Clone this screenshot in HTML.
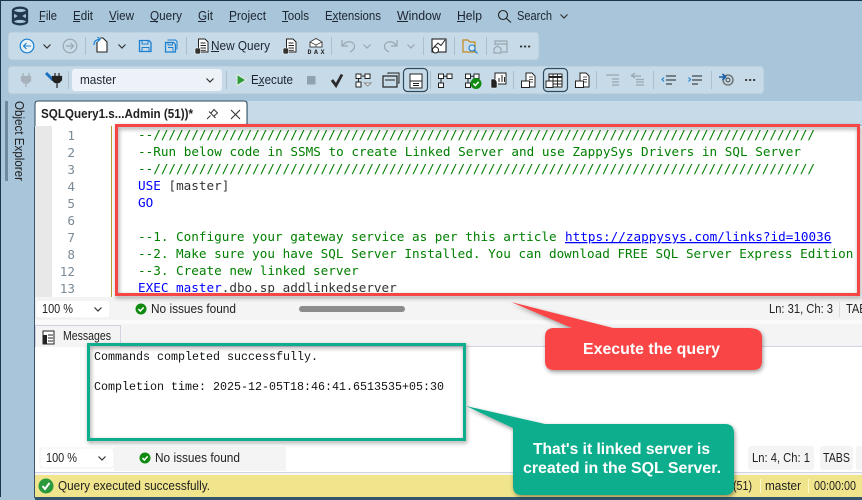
<!DOCTYPE html>
<html><head><meta charset="utf-8"><style>
html,body{margin:0;padding:0;background:#a8c5da;width:862px;height:500px;overflow:hidden}
svg{display:block;position:absolute;left:0;top:0}
.m{font:12.5px "Liberation Sans",sans-serif;fill:#1c2530}
.c{font:12.65px "DejaVu Sans Mono","Liberation Mono",monospace}
.g{fill:#008000}.b{fill:#0000ff}.d{fill:#333}
.n{font:12.65px "DejaVu Sans Mono","Liberation Mono",monospace;fill:#7a8a96;text-anchor:end}
.o{font:11.67px "Liberation Mono",monospace;fill:#111}
.s{font:12.5px "Liberation Sans",sans-serif;fill:#222}
.w{font:bold 15.8px "Liberation Sans",sans-serif;fill:#fff}
.i{fill:none;stroke:#222;stroke-width:1.1}
.gr{fill:none;stroke:#9aa6b0;stroke-width:1.2}
.sep{stroke:#a9bfd0;stroke-width:1}
</style></head><body>
<svg width="862" height="500" viewBox="0 0 862 500" xmlns="http://www.w3.org/2000/svg">
<defs>
<filter id="sh" x="-5%" y="-5%" width="110%" height="115%"><feDropShadow dx="1" dy="2" stdDeviation="2" flood-color="#000" flood-opacity=".4"/></filter>
<clipPath id="ed"><rect x="35" y="126" width="822" height="170"/></clipPath>
<g id="chev"><path d="M-3.5-1.5L0 2 3.5-1.5" fill="none" stroke="#333" stroke-width="1.2"/></g>
<g id="chevg"><path d="M-3.5-1.5L0 2 3.5-1.5" fill="none" stroke="#9aa6b0" stroke-width="1.2"/></g>
<g id="ok"><circle r="5.5" fill="#108a10"/><path d="M-2.6 0L-.7 2 2.7-1.6" fill="none" stroke="#fff" stroke-width="1.5"/></g>
<g id="doc"><path d="M-4.5-7H2L5-4V6H-4.5Z" fill="#fff" stroke="#222"/><path d="M-2.5-3H2.5M-2.5-.5H3M-2.5 2H3M-2.5 4.3H3" stroke="#222" stroke-width=".9"/><rect x="-8" y="2" width="5.5" height="6" rx="1.5" fill="#333" stroke="#fff" stroke-width=".6"/></g>
<g id="flow"><rect x="-7" y="-6" width="5" height="4.5" fill="#fff" stroke="#222"/><rect x="2" y="-6" width="5" height="4.5" fill="#fff" stroke="#222"/><rect x="-7" y="2" width="5" height="5" fill="#fff" stroke="#222"/><path d="M-1-4H2M-4.5-1V2" stroke="#222"/></g>
<g id="bin"><path d="M-4-7H2L5-4V7H-4Z" fill="#fff" stroke="#222"/><path d="M-1-3H3M-1-.5H3M-1 2H3" stroke="#222" stroke-width=".8"/><rect x="-8.500" y="1" width="8" height="6.500" fill="#fff" stroke="#222"/></g>
</defs>

<!-- frame -->
<rect width="862" height="500" fill="#a8c5da"/>
<rect width="862" height="1" fill="#1d3547"/>
<rect width="1" height="500" fill="#1d3547"/>

<!-- logo -->
<g fill="none" stroke="#22394d" stroke-width="2.3">
<ellipse cx="20" cy="10.500" rx="7" ry="2.800"/><ellipse cx="20" cy="21.500" rx="7" ry="2.800"/>
<path d="M13 10.500V22M27 10.500V22M13.500 12L26.500 20M26.500 12L13.500 20"/></g>

<!-- menu -->
<g class="m">
<text x="39" y="20" textLength="18" lengthAdjust="spacingAndGlyphs">File</text>
<text x="73" y="20" textLength="20" lengthAdjust="spacingAndGlyphs">Edit</text>
<text x="109" y="20" textLength="25" lengthAdjust="spacingAndGlyphs">View</text>
<text x="150" y="20" textLength="32" lengthAdjust="spacingAndGlyphs">Query</text>
<text x="198" y="20" textLength="15" lengthAdjust="spacingAndGlyphs">Git</text>
<text x="229" y="20" textLength="37" lengthAdjust="spacingAndGlyphs">Project</text>
<text x="282" y="20" textLength="27" lengthAdjust="spacingAndGlyphs">Tools</text>
<text x="325" y="20" textLength="56" lengthAdjust="spacingAndGlyphs">Extensions</text>
<text x="397" y="20" textLength="44" lengthAdjust="spacingAndGlyphs">Window</text>
<text x="457" y="20" textLength="25" lengthAdjust="spacingAndGlyphs">Help</text>
<text x="517" y="20" textLength="35" lengthAdjust="spacingAndGlyphs">Search</text>
</g>
<path d="M39 21.500H45M73 21.500H80M109 21.500H116M150 21.500H158M198 21.500H206M229 21.500H236M282 21.500H288M332 21.500H338M397 21.500H408M457 21.500H465" stroke="#1c2530" stroke-width=".9"/>
<circle cx="503" cy="15" r="4.500" class="i" stroke="#333"/><path d="M506.500 18.500L511 22.500" class="i"/>
<use href="#chev" x="564" y="16"/>

<!-- toolbar 1 -->
<rect x="8" y="32" width="531" height="28" rx="4" fill="#c6dae8" stroke="#b2c9da"/>
<!-- toolbar 2 -->
<rect x="8" y="66" width="756" height="28" rx="4" fill="#c6dae8" stroke="#b2c9da"/>
<!-- tab strip -->
<rect x="248" y="101" width="614" height="24" fill="#c6dae8"/>

<!-- toolbar 1 icons -->
<circle cx="27" cy="46" r="6.800" fill="#e6f0f8" stroke="#1b7fd0" stroke-width="1.200"/>
<path d="M31 46H23.500M26.500 43L23.500 46 26.500 49" fill="none" stroke="#1b7fd0" stroke-width="1.100"/>
<use href="#chev" x="47" y="46"/>
<circle cx="70" cy="46" r="6.800" class="gr"/><path d="M66 46H73.500M70.500 43L73.500 46 70.500 49" class="gr"/>
<line class="sep" x1="85.500" y1="37" x2="85.500" y2="55"/>
<path d="M97 42V52H107V42L103 38H100" fill="#fff" stroke="#222" stroke-width="1.100"/><path d="M94 45C94 41 96 39.500 100 39.500M97.500 37L100 39.500 97.500 42" fill="none" stroke="#1b7fd0" stroke-width="1.200"/>
<use href="#chev" x="122" y="46"/>
<path d="M139.500 40.500H149L151 42.500V51.500H139.500Z" fill="none" stroke="#1b7fd0" stroke-width="1.300"/><path d="M142 40.500V44H148V40.500M142 51.500V47.500H149V51.500" fill="none" stroke="#1b7fd0" stroke-width="1"/>
<path d="M165.500 42.500H173.500L175.500 44.500V52H165.500Z" fill="none" stroke="#1b7fd0" stroke-width="1.200"/><path d="M167.500 40H175.500L177 41.500V49.500" fill="none" stroke="#1b7fd0" stroke-width="1"/><path d="M168 47.500H173V52M168 42.500V45H172.500V42.500" fill="none" stroke="#1b7fd0" stroke-width=".9"/>
<line class="sep" x1="186.500" y1="37" x2="186.500" y2="55"/>
<use href="#doc" x="203" y="46"/>
<text class="m" x="211" y="50" textLength="59" lengthAdjust="spacingAndGlyphs">New Query</text>
<path d="M211 51.500H219" stroke="#1c2530"/>
<use href="#doc" x="291" y="46"/>
<path d="M310 42L316 38.500 322 42V47H310Z" fill="#fff" stroke="#444"/><path d="M310 42L316 45 322 42M316 45V47" fill="none" stroke="#444" stroke-width=".8"/>
<text x="307.500" y="54" style="font:bold 6.500px 'Liberation Mono',monospace;fill:#222" textLength="17">DAX</text>
<line class="sep" x1="331.500" y1="37" x2="331.500" y2="55"/>
<path d="M342 40V46H348M343 45.500C346 40 354 41 354.500 46C354.800 49 352 51 350 52" class="gr"/>
<use href="#chevg" x="367" y="46"/>
<path d="M397 40V46H391M396 45.500C393 40 385 41 384.500 46C384.200 49 387 51 389 52" class="gr"/>
<use href="#chevg" x="411" y="46"/>
<line class="sep" x1="423.500" y1="37" x2="423.500" y2="55"/>
<rect x="432" y="39" width="14" height="13" fill="#fff" stroke="#222" stroke-width="1.100"/><path d="M434 47L438 43 441 45.500 445 40" fill="none" stroke="#222"/><circle cx="435.500" cy="50" r="3" fill="#fff" stroke="#222"/>
<line class="sep" x1="454.500" y1="37" x2="454.500" y2="55"/>
<path d="M463 52V40H468L470 42H475V52Z" fill="none" stroke="#c48a1a" stroke-width="1.200"/><circle cx="472" cy="48" r="3" fill="#d8e8f4" stroke="#1b7fd0" stroke-width="1.100"/><path d="M474 50L477.500 53.500" stroke="#1b7fd0" stroke-width="1.200"/>
<line class="sep" x1="486.500" y1="37" x2="486.500" y2="55"/>
<path d="M495 45V41H507V52H502M495 44H507" class="gr"/><path d="M494 53V48.500L497.500 46 501 48.500V53Z" class="gr"/>
<path d="M520 46.500h2.200M524 46.500h2.200M528 46.500h2.200" stroke="#333" stroke-width="1.800"/>

<!-- toolbar 2 icons -->
<path d="M23 73V76.500M29 73V76.500M21.500 76.500H30.500V80.500L28 83H24L21.500 80.500ZM26 83V87" fill="#a8b2bb" stroke="#a8b2bb" stroke-width="1.300"/>
<path d="M46 73L53 80" stroke="#1b6fc0" stroke-width="3"/>
<path d="M55 73V76M59 73V76M52.500 76.500H61.500V80L59 82.500H55L52.500 80ZM57 82.500V88" fill="#222" stroke="#222" stroke-width="1.200"/>
<line class="sep" x1="68.500" y1="71" x2="68.500" y2="89"/>
<rect x="72" y="69" width="150" height="22" rx="3" fill="#ecf2f8"/>
<text class="m" x="80" y="84" textLength="36" lengthAdjust="spacingAndGlyphs" style="font-size:13px">master</text>
<use href="#chev" x="210" y="80"/>
<line class="sep" x1="226.500" y1="71" x2="226.500" y2="89"/>
<path d="M237 74.500L246 80 237 85.500Z" fill="#2e9a3a" stroke="#e8f4e8" stroke-width="1"/>
<text class="m" x="251" y="84" textLength="42" lengthAdjust="spacingAndGlyphs">Execute</text>
<path d="M258 85.500H264" stroke="#1c2530" stroke-width=".9"/>
<rect x="307" y="76" width="8.500" height="8.500" fill="#8fa2b2"/>
<path d="M332 80L336 85.500 342 74.500" fill="none" stroke="#2b2b2b" stroke-width="2.800"/>
<use href="#flow" x="363" y="80"/><path d="M364.500 83H371L367.700 86Z" fill="#fff" stroke="#888"/>
<path d="M388 74V73H399V83H398" fill="none" stroke="#222"/><rect x="383" y="76" width="14" height="11" fill="#c6dae8" stroke="#222" stroke-width="1.200"/><path d="M385 80H395" stroke="#222"/>
<rect x="403.500" y="68.500" width="24" height="23" rx="4" fill="none" stroke="#2e4a5e" stroke-width="1.200"/>
<rect x="410" y="74" width="12" height="14" fill="#fff" stroke="#222"/><path d="M410 81H422M413 83.500H419M413 85.500H419" stroke="#222" stroke-width=".9"/>
<line class="sep" x1="430.500" y1="71" x2="430.500" y2="89"/>
<g transform="translate(445,80)"><rect x="-6.500" y="-6" width="5" height="4.500" fill="#fff" stroke="#222"/><rect x="2" y="-6" width="5" height="4.500" fill="#fff" stroke="#222"/><rect x="-6.500" y="3" width="5" height="4.500" fill="#fff" stroke="#222"/><path d="M-1-3.800H2M-4-1V3" stroke="#222"/></g>
<g transform="translate(472,80)"><rect x="-6.500" y="-6" width="5" height="4.500" fill="#fff" stroke="#222"/><rect x="2" y="-6" width="5" height="4.500" fill="#fff" stroke="#222"/><rect x="-6.500" y="3" width="5" height="4.500" fill="#fff" stroke="#222"/><path d="M-1-3.800H2M-4-1V3" stroke="#222"/></g>
<use href="#ok" x="476" y="83.500"/>
<rect x="491" y="79" width="6" height="9" rx="1" fill="#222" stroke="#fff" stroke-width=".5"/><path d="M495 79V73H506V84H498" fill="#fff" stroke="#222"/><path d="M499 82V78M502 82V75M504.500 82V77" stroke="#222"/>
<line class="sep" x1="513.500" y1="71" x2="513.500" y2="89"/>
<use href="#bin" x="530" y="80"/>
<rect x="543.500" y="68.500" width="24" height="23" rx="4" fill="none" stroke="#2e4a5e" stroke-width="1.200"/>
<rect x="549" y="74" width="13" height="13" fill="#fff" stroke="#222"/><path d="M549 77H562" stroke="#222" stroke-width="2"/><path d="M549 81H562M549 84H562M553 74V87M557.500 74V87" stroke="#222" stroke-width=".9"/>
<rect x="546" y="81" width="7" height="6.500" fill="#fff" stroke="#222"/>
<use href="#bin" x="584" y="80"/>
<line class="sep" x1="596.500" y1="71" x2="596.500" y2="89"/>
<path d="M606 75H619M612 79H619M612 82H619M612 85H619" class="gr"/>
<path d="M631 76H641M636 79.500H644M636 82H644M636 85H644" class="gr"/><path d="M635 73L631.500 75.500 635 78" class="gr"/>
<line class="sep" x1="653.500" y1="71" x2="653.500" y2="89"/>
<path d="M666 76H676M666 80H676M666 84H672" stroke="#222" stroke-width="1.100"/><path d="M664 77.500L662 79.500 664 81.500" fill="none" stroke="#1b7fd0" stroke-width="1.100"/>
<path d="M692 76H702M692 80H702M692 84H698" stroke="#222" stroke-width="1.100"/><path d="M688.500 77.500L690.500 79.500 688.500 81.500" fill="none" stroke="#1b7fd0" stroke-width="1.100"/>
<line class="sep" x1="711.500" y1="71" x2="711.500" y2="89"/>
<circle cx="728" cy="80" r="5" fill="none" stroke="#666" stroke-width="1.300"/><circle cx="728" cy="80" r="2" fill="none" stroke="#444"/>
<path d="M719 77H725M722.500 74L725.500 77 722.500 80" fill="none" stroke="#1b5fa8" stroke-width="1.600"/>
<path d="M745 80h2.200M749 80h2.200M753 80h2.200" stroke="#333" stroke-width="1.800"/>

<!-- Object Explorer -->
<rect x="5" y="101" width="3" height="80" fill="#6f8ba0"/>
<text transform="translate(15,101) rotate(90)" style="font:12.5px 'Liberation Sans',sans-serif;fill:#222" textLength="80" lengthAdjust="spacingAndGlyphs">Object Explorer</text>

<!-- tab -->
<path d="M35 127V104Q35 101 38 101H244Q247 101 247 104V127Z" fill="#fff" stroke="#2e4a5e"/>
<text x="41" y="118" style="font:bold 12.5px 'Liberation Sans',sans-serif;fill:#222" textLength="152" lengthAdjust="spacingAndGlyphs">SQLQuery1.s...Admin (51))*</text>
<path d="M207 119L210.500 115.500M209 111.500L215.500 118M211 113L214 109.500 217.500 113 214 116" fill="none" stroke="#333"/>
<path d="M231 110L240 119M240 110L231 119" stroke="#333" stroke-width="1.100"/>

<!-- editor -->
<rect x="35" y="126" width="827" height="321" fill="#fff"/>
<rect x="35" y="126" width="17" height="171" fill="#e8e8e8"/>
<rect x="111" y="126" width="1" height="171" fill="#b89a30"/>
<g class="n">
<text x="75" y="140">1</text><text x="75" y="157">2</text><text x="75" y="174">3</text><text x="75" y="191">4</text><text x="75" y="208">5</text><text x="75" y="225">6</text><text x="75" y="242">7</text><text x="75" y="259">8</text><text x="75" y="276">12</text><text x="75" y="293">13</text>
</g>
<g class="c" clip-path="url(#ed)">
<text class="g" x="138" y="139" textLength="677">--///////////////////////////////////////////////////////////////////////////////////////</text>
<text class="g" x="138" y="156" textLength="663">--Run below code in SSMS to create Linked Server and use ZappySys Drivers in SQL Server</text>
<text class="g" x="138" y="173" textLength="677">--///////////////////////////////////////////////////////////////////////////////////////</text>
<text x="138" y="190"><tspan class="b">USE</tspan><tspan class="d"> [master]</tspan></text>
<text class="b" x="138" y="207">GO</text>
<text class="g" x="138" y="241">--1. Configure your gateway service as per this article</text>
<text class="b" x="565" y="241" text-decoration="underline">https://zappysys.com/links?id=10036</text>
<text class="g" x="138" y="258">--2. Make sure you have SQL Server Installed. You can download FREE SQL Server Express Edition</text>
<text class="g" x="138" y="275">--3. Create new linked server</text>
<text x="138" y="292"><tspan class="b">EXEC master</tspan><tspan class="d">.dbo.sp_addlinkedserver</tspan></text>
</g>

<!-- status row 1 -->
<rect x="35" y="297" width="827" height="23" fill="#f4f4f4"/>
<rect x="36" y="300" width="74" height="18" rx="3" fill="#fff" stroke="#eee"/>
<text class="s" x="42" y="313" textLength="31" lengthAdjust="spacingAndGlyphs">100 %</text>
<use href="#chev" x="98" y="309"/>
<use href="#ok" x="141" y="309"/>
<text class="s" x="151" y="313" textLength="85" lengthAdjust="spacingAndGlyphs">No issues found</text>
<rect x="299" y="306" width="106" height="6" rx="3" fill="#8c8c8c"/>
<text class="s" x="769" y="313" textLength="64" lengthAdjust="spacingAndGlyphs">Ln: 31, Ch: 3</text>
<rect x="839" y="302" width="1" height="15" fill="#ddd"/>
<text class="s" x="846" y="313" textLength="28" lengthAdjust="spacingAndGlyphs">TABS</text>

<!-- messages header -->
<rect x="35" y="320" width="827" height="4" fill="#fafafa"/>
<rect x="35" y="324" width="827" height="23" fill="#f4f4f4"/>
<rect x="35" y="346" width="827" height="1" fill="#d2d2e2"/>
<path d="M35.500 347V325.500H120.500V347" fill="#f4f4f4" stroke="#d2d2e2"/>
<rect x="43" y="331" width="11" height="13" fill="#fff" stroke="#222"/><path d="M48 335H53M48 338H53M48 341H53" stroke="#222"/><rect x="43" y="335" width="4" height="9" fill="#222"/>
<text class="s" x="63" y="340" textLength="48" lengthAdjust="spacingAndGlyphs">Messages</text>

<!-- output -->
<rect x="35" y="347" width="827" height="100" fill="#fff"/>
<text class="o" x="94" y="360" textLength="224">Commands completed successfully.</text>
<text class="o" x="94" y="390" textLength="350">Completion time: 2025-12-05T18:46:41.6513535+05:30</text>

<!-- status row 2 -->
<rect x="35" y="447" width="827" height="25" fill="#fff"/>
<rect x="114" y="447" width="172" height="24" fill="#f4f4f4"/>
<rect x="40" y="448" width="74" height="20" rx="3" fill="#fff" stroke="#f0f0f0"/>
<text class="s" x="46" y="462" textLength="31" lengthAdjust="spacingAndGlyphs">100 %</text>
<use href="#chev" x="102" y="458"/>
<use href="#ok" x="145" y="458"/>
<text class="s" x="155" y="462" textLength="85" lengthAdjust="spacingAndGlyphs">No issues found</text>
<rect x="748" y="446" width="66" height="24" rx="3" fill="#f4f4f4"/>
<rect x="820" y="446" width="33" height="24" rx="3" fill="#f4f4f4"/>
<rect x="856" y="446" width="6" height="24" rx="2" fill="#f4f4f4"/>
<text class="s" x="752" y="462" textLength="58" lengthAdjust="spacingAndGlyphs">Ln: 4, Ch: 1</text>
<text class="s" x="823" y="462" textLength="27" lengthAdjust="spacingAndGlyphs">TABS</text>
<rect x="35" y="472" width="827" height="1" fill="#d2d2e2"/>
<rect x="35" y="473" width="827" height="2" fill="#f6f6f6"/>

<!-- yellow status -->
<rect x="35" y="475" width="827" height="22" fill="#f0e58c"/>
<circle cx="46" cy="486" r="7.500" fill="#2a9a3c"/><path d="M42.500 486L45 489 49.500 483" fill="none" stroke="#fff" stroke-width="2"/>
<text class="s" x="58" y="490" textLength="152" lengthAdjust="spacingAndGlyphs">Query executed successfully.</text>
<text class="s" x="733" y="490" textLength="19" lengthAdjust="spacingAndGlyphs">(51)</text>
<rect x="760" y="479" width="1" height="14" fill="#fff8c8"/>
<text class="s" x="765" y="490" textLength="36" lengthAdjust="spacingAndGlyphs">master</text>
<rect x="808" y="479" width="1" height="14" fill="#fff8c8"/>
<text class="s" x="814" y="490" textLength="42" lengthAdjust="spacingAndGlyphs">00:00:00</text>
<rect x="35" y="497" width="827" height="3" fill="#33566e"/>
<rect x="0" y="497" width="34" height="3" fill="#a8c5da"/>
<rect x="34" y="127" width="1" height="371" fill="#3a566a"/>

<!-- annotations -->
<rect x="116.500" y="125.500" width="742" height="169" fill="none" stroke="#f54444" stroke-width="3" filter="url(#sh)"/>
<rect x="88.500" y="344.500" width="376" height="95" fill="none" stroke="#0aae8e" stroke-width="3" filter="url(#sh)"/>

<path d="M511 302L572 328H748Q762 328 762 337V361Q762 370 753 370H554Q545 370 545 361V337Q545 328 554 328H613Z" fill="#f94444" filter="url(#sh)"/>
<text class="w" x="583" y="354" textLength="137" lengthAdjust="spacingAndGlyphs">Execute the query</text>

<path d="M466 406L513 428V486Q513 495 522 495H725Q734 495 734 486V433Q734 424 725 424H545Z" fill="#0aae8e" filter="url(#sh)"/>
<text class="w" x="533" y="454" textLength="177" lengthAdjust="spacingAndGlyphs">That's it linked server is</text>
<text class="w" x="523" y="473" textLength="198" lengthAdjust="spacingAndGlyphs">created in the SQL Server.</text>
</svg>
</body></html>
